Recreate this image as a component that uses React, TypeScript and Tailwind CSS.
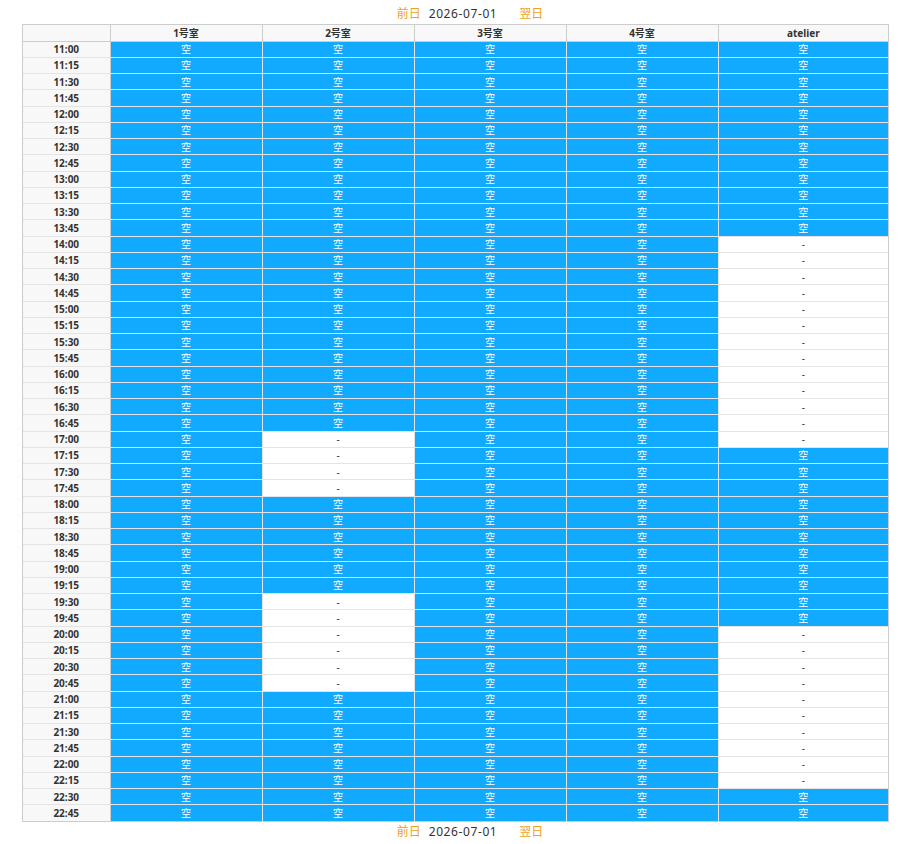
import React from 'react';

const rooms = ['1号室', '2号室', '3号室', '4号室', 'atelier'];

const times: string[] = [];
for (let h = 11; h <= 22; h++) {
  for (const m of ['00', '15', '30', '45']) times.push(`${h}:${m}`);
}

// closed slots per room, as [from, to] inclusive
const closed: Record<number, [string, string][]> = {
  1: [['17:00', '17:45'], ['19:30', '20:45']],
  4: [['14:00', '17:00'], ['20:00', '22:15']],
};

const toMin = (t: string) => {
  const [h, m] = t.split(':').map(Number);
  return h * 60 + m;
};

const isOpen = (room: number, t: string) => {
  const ranges = closed[room] || [];
  return !ranges.some(([a, b]) => toMin(t) >= toMin(a) && toMin(t) <= toMin(b));
};

const DayNav = ({ top }: { top?: boolean }) => (
  <div
    className={`flex justify-center items-center text-[12px] leading-[20px] text-[#333] ${
      top ? 'h-[24px] pt-[3px] pl-[33px]' : 'h-[20px] pl-[33px]'
    }`}
  >
    <a className="text-[#f0a020] cursor-pointer">前日</a>
    <span className="ml-[8px] tracking-[0.6px]">2026-07-01</span>
    <a className="ml-[22px] text-[#f0a020] cursor-pointer">翌日</a>
  </div>
);

const App = () => {
  return (
    <div
      className="w-[907px] min-h-[844px] bg-white"
      style={{ fontFamily: '"Noto Sans", "Noto Sans CJK JP", sans-serif' }}
    >
      <DayNav top />
      <div className="ml-[22px] w-[867px] border border-[#cccccc]">
        <table className="w-full table-fixed border-collapse text-[10px]">
          <colgroup>
            <col className="w-[87px]" />
            <col className="w-[152px]" />
            <col className="w-[152px]" />
            <col className="w-[152px]" />
            <col className="w-[152px]" />
            <col />
          </colgroup>
          <thead>
            <tr className="h-[16px] bg-[#f8f8f8]">
              <th className="border-r border-b border-[#cccccc]"></th>
              {rooms.map((r) => (
                <th
                  key={r}
                  className="border-r last:border-r-0 border-b border-[#cccccc] font-bold text-[#333] leading-[14px] p-0"
                >
                  {r}
                </th>
              ))}
            </tr>
          </thead>
          <tbody>
            {times.map((t, ri) => {
              const last = ri === times.length - 1;
              return (
                <tr key={t} className="h-[16.25px]">
                  <td
                    className={`bg-[#f8f8f8] border-r border-[#cccccc] text-center font-bold text-[#333] leading-[14px] p-0 ${
                      last ? '' : 'border-b border-b-[#e4e4e4]'
                    }`}
                  >
                    {t}
                  </td>
                  {rooms.map((r, i) => {
                    const open = isOpen(i, t);
                    return (
                      <td
                        key={r}
                        className={`border-r last:border-r-0 border-[#e4e4e4] text-center leading-[14px] p-0 ${
                          last ? '' : 'border-b'
                        } ${open ? 'bg-[#12aaff] text-white' : 'bg-white text-[#333]'}`}
                      >
                        {open ? '空' : '-'}
                      </td>
                    );
                  })}
                </tr>
              );
            })}
          </tbody>
        </table>
      </div>
      <DayNav />
    </div>
  );
};

export default App;
